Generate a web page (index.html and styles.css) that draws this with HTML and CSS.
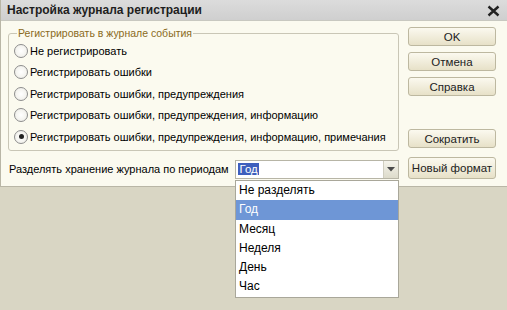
FILE: index.html
```html
<!DOCTYPE html>
<html>
<head>
    <title>Настройка журнала регистрации</title>
    <link rel="stylesheet" href="styles.css">
</head>
<body>
    <div class="window">
        <div class="titlebar">
            <span class="title">Настройка журнала регистрации</span>
            <svg class="close" width="13" height="12" viewBox="0 0 13 12">
                <path d="M1.5 1.5 L11.5 10.5 M11.5 1.5 L1.5 10.5" stroke="#222" stroke-width="2.4"/>
            </svg>
        </div>
        <div class="content">
            <div class="left">
                <fieldset class="group">
                    <legend>Регистрировать в журнале события</legend>
                    <label class="radio"><span class="dot"></span>Не регистрировать</label>
                    <label class="radio"><span class="dot"></span>Регистрировать ошибки</label>
                    <label class="radio"><span class="dot"></span>Регистрировать ошибки, предупреждения</label>
                    <label class="radio"><span class="dot"></span>Регистрировать ошибки, предупреждения, информацию</label>
                    <label class="radio"><span class="dot checked"></span>Регистрировать ошибки, предупреждения, информацию, примечания</label>
                </fieldset>
                <div class="period">
                    <span class="period-label">Разделять хранение журнала по периодам</span>
                    <div class="combo">
                        <span class="combo-value"><span class="sel">Год</span></span>
                        <span class="combo-btn">
                            <svg width="8" height="5" viewBox="0 0 8 5"><path d="M0 0 H8 L4 4.5 Z" fill="#4a4a4a"/></svg>
                        </span>
                    </div>
                </div>
            </div>
            <div class="buttons">
                <button>OK</button>
                <button>Отмена</button>
                <button>Справка</button>
                <div class="spacer"></div>
                <button>Сократить</button>
                <button class="tall">Новый формат</button>
            </div>
        </div>
    </div>
    <ul class="list">
        <li>Не разделять</li>
        <li class="active">Год</li>
        <li>Месяц</li>
        <li>Неделя</li>
        <li>День</li>
        <li>Час</li>
    </ul>
</body>
</html>
```

FILE: styles.css
```css
html, body { height: 100%; }
body {
    margin: 0;
    background: #d9d6c4;
    font-family: "Liberation Sans", Arial, sans-serif;
    font-size: 11px;
    color: #000;
}
.window {
    width: 507px;
    height: 187px;
    background: #fbfaef;
    border-left: 1px solid #b9b6a6;
    border-bottom: 1px solid #b9b6a6;
    box-sizing: border-box;
}
.titlebar {
    height: 20px;
    background: linear-gradient(#dcdcdc, #cfcfcf);
    display: flex;
    align-items: center;
    justify-content: space-between;
    padding: 0 7px 0 6px;
    border-bottom: 1px solid #c8c8c0;
}
.title {
    font-weight: bold;
    font-size: 12px;
    color: #1e1e1e;
}
.close { margin-top: 2px; }
.content {
    display: flex;
    padding: 6px 11px 0 7px;
}
.left { width: 391px; }
.group {
    margin: 0;
    padding: 1px 0 5px 5px;
    border: 1px solid #c9c6b6;
    border-radius: 3px;
    height: 124px;
    box-sizing: border-box;
}
.group legend {
    color: #8a6a22;
    padding: 0 1px;
    margin-left: 3px;
    font-size: 10.5px;
}
.radio {
    display: flex;
    align-items: center;
    height: 21.5px;
    white-space: nowrap;
    font-size: 11px;
}
.dot {
    width: 12px;
    height: 12px;
    border: 1px solid #8d8d8d;
    border-radius: 50%;
    background: radial-gradient(#ffffff, #ecebe4);
    margin-right: 2px;
    display: flex;
    align-items: center;
    justify-content: center;
}
.dot.checked::after {
    content: "";
    width: 5px;
    height: 5px;
    border-radius: 50%;
    background: #222;
}
.period {
    display: flex;
    align-items: center;
    margin-top: 8px;
    height: 20px;
}
.period-label {
    padding-left: 1px;
    width: 227px;
    white-space: nowrap;
    font-size: 11px;
}
.combo {
    display: flex;
    width: 164px;
    height: 19px;
    border: 1px solid #b7b5a6;
    box-sizing: border-box;
    background: #fff;
}
.combo-value {
    flex: 1;
    padding: 2px 0 0 2px;
    font-size: 11.5px;
}
.sel {
    background: #3e5fbd;
    color: #fff;
    padding: 0 1px;
}
.combo-btn {
    width: 14px;
    display: flex;
    align-items: center;
    justify-content: center;
    background: linear-gradient(#f4f3ea, #dddbcb);
    border-left: 1px solid #d0cec0;
}
/* открытый список периодов, лежит поверх нижнего края окна */
.list {
    position: relative;
    z-index: 2;
    width: 164px;
    margin: -7px 0 0 235px;
    padding: 0;
    list-style: none;
    background: #fff;
    border: 1px solid #a9a79a;
    box-sizing: border-box;
}
.list li {
    height: 19.3px;
    line-height: 19.3px;
    padding-left: 3px;
    font-size: 12px;
}
.list li.active {
    background: #6e96d6;
    color: #fff;
}
.buttons {
    display: flex;
    flex-direction: column;
    margin-left: 9px;
    width: 88px;
}
button {
    height: 19px;
    margin-bottom: 6px;
    font-family: "Liberation Sans", Arial, sans-serif;
    font-size: 11.5px;
    white-space: nowrap;
    color: #222;
    background: linear-gradient(#fbf9ef, #e7e1c8);
    border: 1px solid #bdb8a0;
    border-radius: 3px;
    padding: 0;
}
.spacer { height: 27px; }
.tall { height: 22px; margin-top: 3px; margin-bottom: 0; }
```
